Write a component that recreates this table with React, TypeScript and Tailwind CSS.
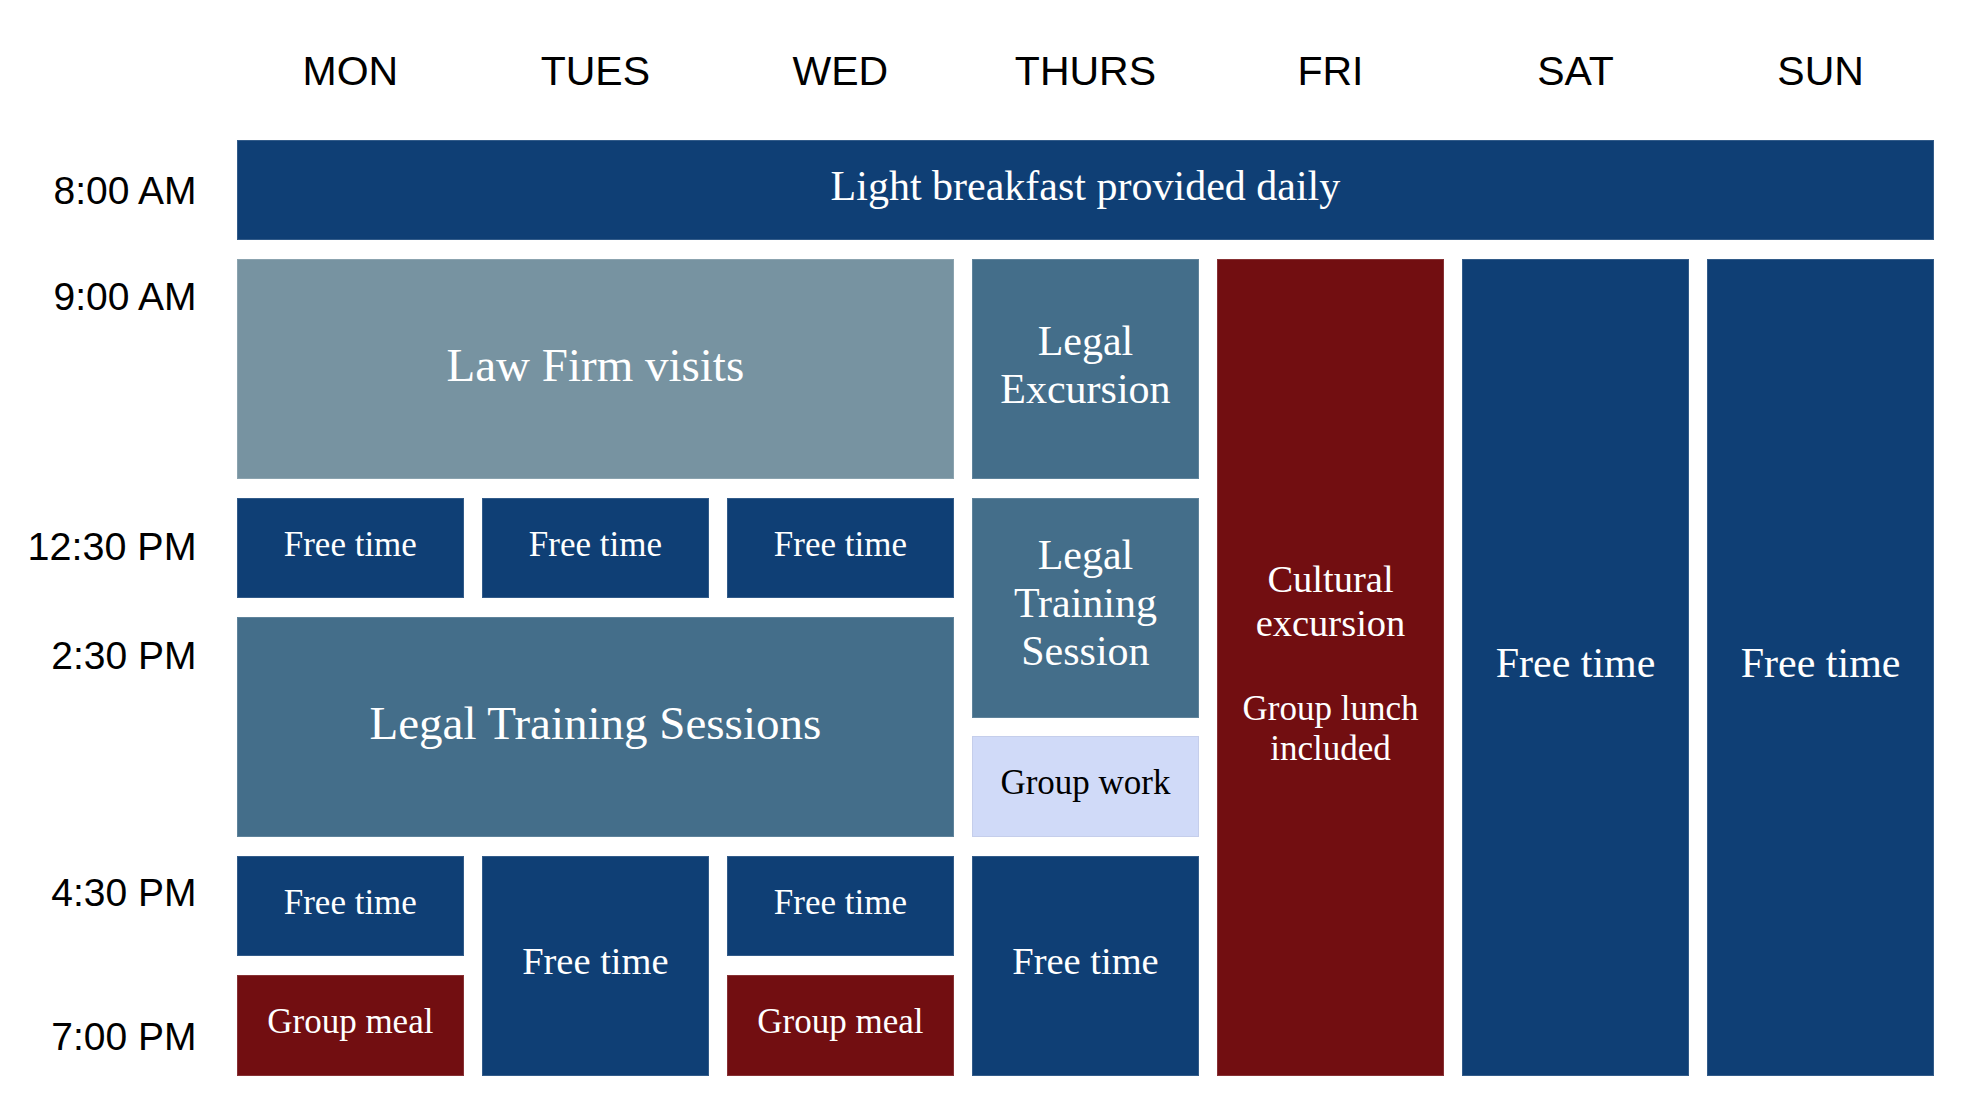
import React from "react";

const serif = { fontFamily: '"Liberation Serif", "Times New Roman", serif' };

const NAVY = "bg-[#0f3f75]";
const RED = "bg-[#720e11]";
const SLATE = "bg-[#446e8a]";
const LIGHT = "bg-[#7793a1]";
const LAV = "bg-[#d0daf8]";

function Cell({ className, children }: { className: string; children: React.ReactNode }) {
  return (
    <div
      className={`flex flex-col items-center justify-center pb-[8px] text-center text-white border border-white/15 ${className}`}
      style={serif}
    >
      {children}
    </div>
  );
}

export default function App() {
  const days = ["MON", "TUES", "WED", "THURS", "FRI", "SAT", "SUN"];
  const dayCols = ["col-start-2", "col-start-3", "col-start-4", "col-start-5", "col-start-6", "col-start-7", "col-start-8"];
  const labelStyle = { fontFamily: '"Liberation Sans", Arial, sans-serif' };
  return (
    <div className="w-[1968px] h-[1102px] bg-white overflow-hidden">
      <div className="grid grid-cols-[218.6px_repeat(7,226.66px)] grid-rows-[121.2px_repeat(8,100.5px)] gap-x-[18.4px] gap-y-[18.8px]">
        {days.map((d, i) => (
          <div
            key={d}
            className={`${dayCols[i]} row-start-1 pt-[51px] text-center text-[41px] leading-none text-black`}
            style={labelStyle}
          >
            {d}
          </div>
        ))}

        <div className="col-start-1 row-start-2 pt-[31px] pr-[22px] text-right text-[39px] leading-none text-black" style={labelStyle}>8:00 AM</div>
        <div className="col-start-1 row-start-3 pt-[18px] pr-[22px] text-right text-[39px] leading-none text-black" style={labelStyle}>9:00 AM</div>
        <div className="col-start-1 row-start-5 pt-[29px] pr-[22px] text-right text-[39.5px] leading-none text-black" style={labelStyle}>12:30 PM</div>
        <div className="col-start-1 row-start-6 pt-[18.5px] pr-[22px] text-right text-[39px] leading-none text-black" style={labelStyle}>2:30 PM</div>
        <div className="col-start-1 row-start-8 pt-[17.5px] pr-[22px] text-right text-[39px] leading-none text-black" style={labelStyle}>4:30 PM</div>
        <div className="col-start-1 row-start-9 pt-[41.6px] pr-[22px] text-right text-[39px] leading-none text-black" style={labelStyle}>7:00 PM</div>

        <Cell className={`col-start-2 col-span-7 row-start-2 ${NAVY} text-[42px] leading-none`}>Light breakfast provided daily</Cell>

        <Cell className={`col-start-2 col-span-3 row-start-3 row-span-2 ${LIGHT} text-[47px] leading-none`}>Law Firm visits</Cell>
        <Cell className={`col-start-5 row-start-3 row-span-2 ${SLATE} text-[42px] leading-[48px]`}>
          <span>Legal</span>
          <span>Excursion</span>
        </Cell>
        <Cell className={`col-start-6 row-start-3 row-span-7 ${RED}`}>
          <span className="text-[38.5px] leading-[44px]">Cultural</span>
          <span className="text-[38.5px] leading-[44px]">excursion</span>
          <span className="mt-[44px] text-[35px] leading-[40px]">Group lunch</span>
          <span className="text-[35px] leading-[40px]">included</span>
        </Cell>
        <Cell className={`col-start-7 row-start-3 row-span-7 ${NAVY} text-[42px] leading-none`}>Free time</Cell>
        <Cell className={`col-start-8 row-start-3 row-span-7 ${NAVY} text-[42px] leading-none`}>Free time</Cell>

        <Cell className={`col-start-2 row-start-5 ${NAVY} text-[35px] leading-none`}>Free time</Cell>
        <Cell className={`col-start-3 row-start-5 ${NAVY} text-[35px] leading-none`}>Free time</Cell>
        <Cell className={`col-start-4 row-start-5 ${NAVY} text-[35px] leading-none`}>Free time</Cell>
        <Cell className={`col-start-5 row-start-5 row-span-2 ${SLATE} text-[42px] leading-[47.7px]`}>
          <span>Legal</span>
          <span>Training</span>
          <span>Session</span>
        </Cell>

        <Cell className={`col-start-2 col-span-3 row-start-6 row-span-2 ${SLATE} text-[47px] leading-none`}>Legal Training Sessions</Cell>
        <Cell className={`col-start-5 row-start-7 ${LAV} !text-black !border-black/5 text-[35px] leading-none`}>Group work</Cell>

        <Cell className={`col-start-2 row-start-8 ${NAVY} text-[35px] leading-none`}>Free time</Cell>
        <Cell className={`col-start-2 row-start-9 ${RED} text-[35px] leading-none`}>Group meal</Cell>
        <Cell className={`col-start-3 row-start-8 row-span-2 ${NAVY} text-[38.5px] leading-none`}>Free time</Cell>
        <Cell className={`col-start-4 row-start-8 ${NAVY} text-[35px] leading-none`}>Free time</Cell>
        <Cell className={`col-start-4 row-start-9 ${RED} text-[35px] leading-none`}>Group meal</Cell>
        <Cell className={`col-start-5 row-start-8 row-span-2 ${NAVY} text-[38.5px] leading-none`}>Free time</Cell>
      </div>
    </div>
  );
}
